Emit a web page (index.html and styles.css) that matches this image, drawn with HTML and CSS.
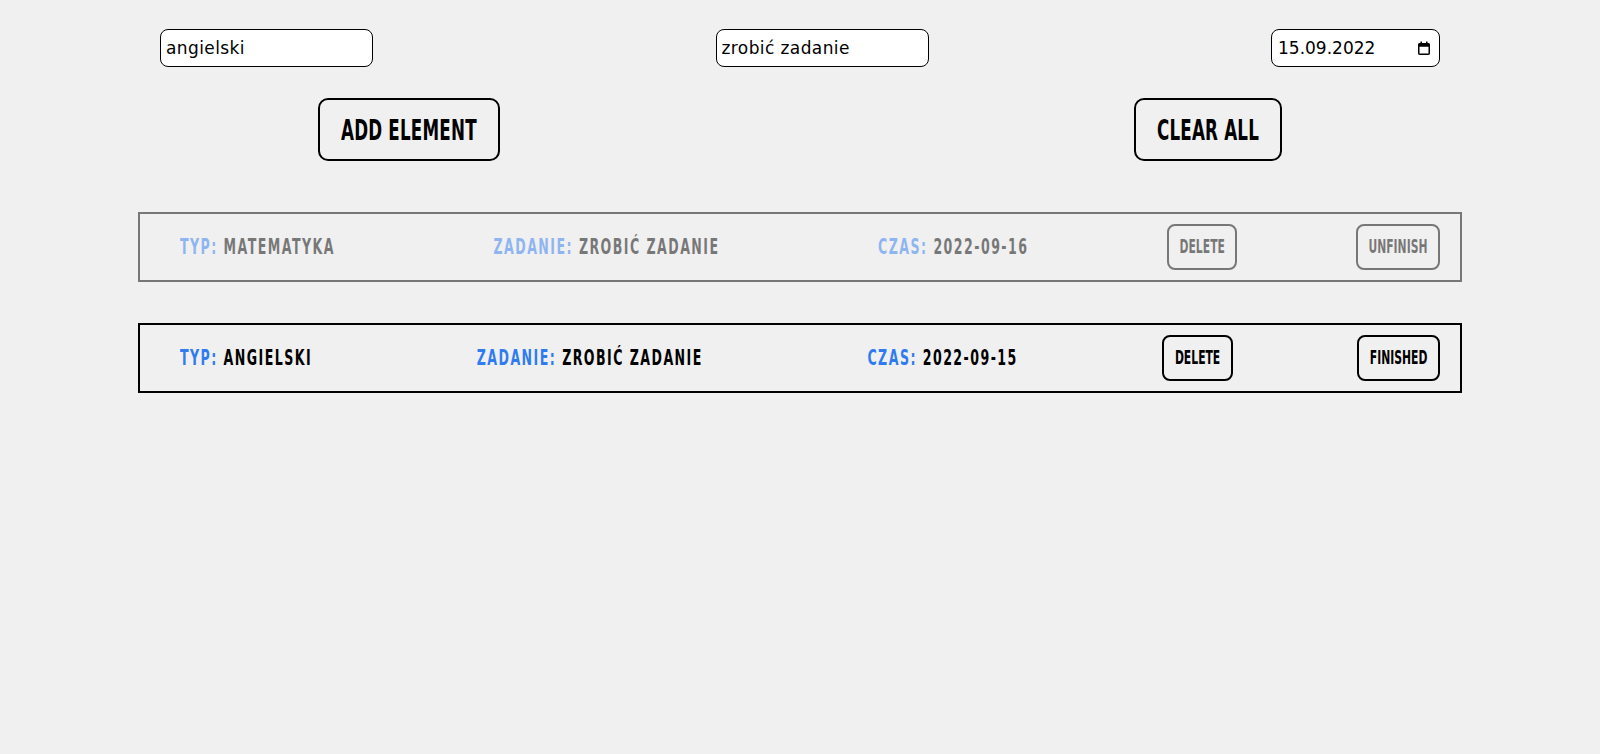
FILE: index.html
```html
<!DOCTYPE html>
<html lang="pl">
<head>
<meta charset="utf-8">
<title>Lista zadań</title>
<link rel="stylesheet" href="styles.css">
</head>
<body>
<div class="app">
  <div class="inputs">
    <input class="field" type="text" value="angielski">
    <input class="field" type="text" value="zrobić zadanie">
    <div class="field date-field">
      <span class="date-text">15.09.2022</span>
      <svg class="cal" width="12" height="14" viewBox="0 0 12 14" aria-hidden="true">
        <rect x="0.75" y="2.75" width="10.5" height="10.5" rx="1" fill="none" stroke="#000" stroke-width="1.5"/>
        <rect x="0.75" y="2.75" width="10.5" height="3" fill="#000"/>
        <rect x="2.5" y="0.5" width="1.5" height="2.5" fill="#000"/>
        <rect x="8" y="0.5" width="1.5" height="2.5" fill="#000"/>
      </svg>
    </div>
  </div>
  <div class="actions">
    <button class="big-btn"><span class="tall">Add element</span></button>
    <button class="big-btn"><span class="tall">Clear all</span></button>
  </div>
  <div class="list">
    <div class="task done">
      <p class="cell"><span class="lbl">Typ:</span> matematyka</p>
      <p class="cell"><span class="lbl">Zadanie:</span> zrobić zadanie</p>
      <p class="cell"><span class="lbl">Czas:</span> 2022-09-16</p>
      <button class="small-btn"><span class="tall">Delete</span></button>
      <button class="small-btn"><span class="tall">Unfinish</span></button>
    </div>
    <div class="task">
      <p class="cell"><span class="lbl">Typ:</span> angielski</p>
      <p class="cell"><span class="lbl">Zadanie:</span> zrobić zadanie</p>
      <p class="cell"><span class="lbl">Czas:</span> 2022-09-15</p>
      <button class="small-btn"><span class="tall">Delete</span></button>
      <button class="small-btn"><span class="tall">Finished</span></button>
    </div>
  </div>
</div>
</body>
</html>
```
FILE: styles.css
```css
* { box-sizing: border-box; }
html, body { margin: 0; padding: 0; }
body {
  background: #f0f0f0;
  color: #000;
  font-family: "DejaVu Sans", sans-serif;
  min-height: 754px;
}
.app {
  padding-top: 29px;
}
.inputs {
  width: 1280px;
  margin: 0 auto;
  display: flex;
  justify-content: space-between;
  align-items: center;
}
.field {
  width: 213px;
  height: 38px;
  border: 1px solid #000;
  border-radius: 8px;
  background: #fff;
  padding: 0 5px;
  font-family: "DejaVu Sans", sans-serif;
  font-size: 17px;
  letter-spacing: 0.4px;
  color: #000;
  outline: none;
}
.date-field {
  width: 169px;
  display: flex;
  align-items: center;
  justify-content: space-between;
  padding: 0 9px 0 6px;
}
.date-text { letter-spacing: 0; }
.cal { display: block; }
.actions {
  width: 964px;
  margin: 31px auto 0;
  display: flex;
  justify-content: space-between;
}
.big-btn, .small-btn, .cell {
  font-family: "DejaVu Sans Condensed", "DejaVu Sans", sans-serif;
  font-stretch: condensed;
  font-weight: 700;
  text-transform: uppercase;
}
.tall {
  display: inline-block;
  transform: scaleY(1.5);
}
.big-btn {
  height: 63px;
  padding: 0 21px;
  border: 2px solid #000;
  border-radius: 10px;
  background: transparent;
  color: #000;
  font-size: 18.6px;
  letter-spacing: 0.2px;
  cursor: pointer;
}
.big-btn .tall { transform: scaleY(1.55); }
.list {
  margin-top: 51px;
  display: flex;
  flex-direction: column;
  gap: 41px;
}
.task {
  box-sizing: content-box;
  width: 1280px;
  height: 66px;
  margin: 0 auto;
  padding: 0 20px;
  border: 2px solid #000;
  display: flex;
  align-items: center;
  justify-content: space-between;
}
.task.done { opacity: 0.5; }
.cell {
  margin: 0 20px;
  font-size: 14px;
  letter-spacing: 1.45px;
  white-space: nowrap;
  transform: scaleY(1.47);
}
.lbl { color: #2f7cf1; }
.small-btn {
  height: 46px;
  padding: 0 10.5px;
  border: 2px solid #000;
  border-radius: 8px;
  background: transparent;
  color: #000;
  font-size: 12px;
  letter-spacing: 0;
  cursor: pointer;
}
.small-btn .tall { transform: scaleY(1.6); }
```
